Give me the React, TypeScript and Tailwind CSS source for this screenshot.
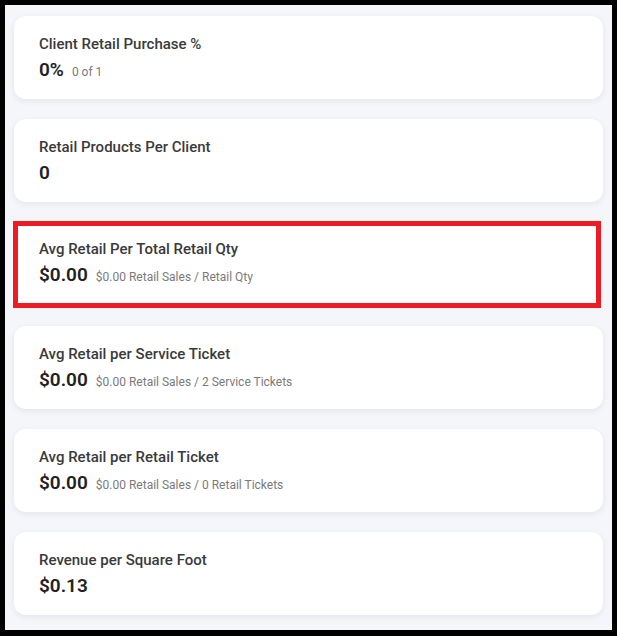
const CARDS = [
  { title: "Client Retail Purchase %", value: "0%", note: "0 of 1" },
  { title: "Retail Products Per Client", value: "0", note: "" },
  { title: "Avg Retail Per Total Retail Qty", value: "$0.00", note: "$0.00 Retail Sales / Retail Qty", marked: true },
  { title: "Avg Retail per Service Ticket", value: "$0.00", note: "$0.00 Retail Sales / 2 Service Tickets" },
  { title: "Avg Retail per Retail Ticket", value: "$0.00", note: "$0.00 Retail Sales / 0 Retail Tickets" },
  { title: "Revenue per Square Foot", value: "$0.13", note: "" },
];

function MetricCard({ title, value, note, marked }: { title: string; value: string; note: string; marked?: boolean }) {
  // the highlighted card carries a red annotation frame instead of the rounded shadowed box
  const box = marked
    ? "h-[87px] w-[588px] -ml-px -mt-px -mb-[2px] border-[5px] border-[#ed1c24] bg-white pl-[21px] pt-[13px]"
    : "h-[83px] rounded-xl bg-white shadow-[0_2px_6px_rgba(30,40,90,0.08)] pl-[25px] pt-[18px]";
  return (
    <div className={box}>
      <div className="text-[15px] leading-5 font-medium text-[#3a3a3a]">{title}</div>
      <div className="mt-[4px] flex items-baseline gap-2">
        <span className="text-[19px] leading-6 font-semibold text-[#222]">{value}</span>
        {note && <span className="text-[12px] text-[#7a7a7a]">{note}</span>}
      </div>
    </div>
  );
}

export default function App() {
  return (
    <div className="w-[617px] h-[636px] bg-black pt-[5px] pl-[5px] pr-[5px] pb-[6px]" style={{ fontFamily: "Roboto, 'Noto Sans', sans-serif" }}>
      <div className="h-full bg-[#f5f6fa] flex flex-col gap-5 pt-[11px] px-[9px] overflow-hidden">
        {CARDS.map((c) => (
          <MetricCard key={c.title} {...c} />
        ))}
      </div>
    </div>
  );
}
